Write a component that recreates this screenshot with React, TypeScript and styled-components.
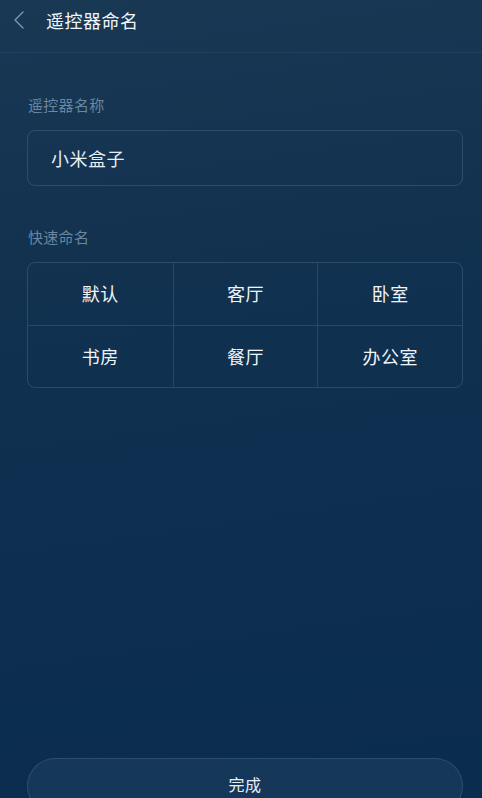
import React from "react";
import styled, { createGlobalStyle } from "styled-components";

const GlobalStyle = createGlobalStyle`
  html, body {
    margin: 0;
    padding: 0;
    overflow: hidden;
    background: #0c2c4d;
  }
  body {
    font-family: "Noto Sans CJK SC", "Noto Sans", sans-serif;
    -webkit-font-smoothing: antialiased;
  }
`;

const quickNames = ["默认", "客厅", "卧室", "书房", "餐厅", "办公室"];

const Page = styled.div`
  display: flex;
  flex-direction: column;
  height: 100vh;
  background: linear-gradient(172deg, #183854 0%, #11314f 35%, #0d2e4f 70%, #0a2c4e 100%);
  color: #e9eff5;
`;

const Header = styled.header`
  display: flex;
  align-items: center;
  height: 53px;
  padding: 0 0 0 13px;
  border-bottom: 1px solid rgba(255, 255, 255, 0.06);
  box-sizing: border-box;
  flex-shrink: 0;
`;

const BackButton = styled.button`
  display: flex;
  align-items: center;
  justify-content: center;
  width: 12px;
  height: 40px;
  margin: -12px 21px 0 0;
  padding: 0;
  border: 0;
  background: none;
  cursor: pointer;
`;

const Title = styled.h1`
  margin: -13px 0 0;
  font-size: 18px;
  font-weight: 400;
  color: #f1f5f9;
  letter-spacing: 0.5px;
`;

const Body = styled.main`
  display: flex;
  flex-direction: column;
  flex: 1;
  padding: 0 19px 0 27px;
`;

const SectionLabel = styled.div<{ $top: number }>`
  margin-top: ${(p) => p.$top}px;
  font-size: 15px;
  line-height: 20px;
  color: #6a86a1;
  padding-left: 1px;
  letter-spacing: 0.3px;
`;

const NameField = styled.div`
  display: flex;
  align-items: center;
  height: 56px;
  margin-top: 15px;
  padding: 0 23px;
  border: 1px solid rgba(150, 180, 210, 0.2);
  border-radius: 8px;
  font-size: 18px;
  color: #e6edf4;
  letter-spacing: 0.5px;
  box-sizing: border-box;
`;

const Grid = styled.div`
  display: grid;
  grid-template-columns: repeat(3, 1fr);
  grid-auto-rows: 62px;
  margin-top: 15px;
  border: 1px solid rgba(150, 180, 210, 0.2);
  border-radius: 8px;
  overflow: hidden;
`;

const Cell = styled.button<{ $col: number; $row: number }>`
  display: flex;
  align-items: center;
  justify-content: center;
  padding: 0 0 2px;
  background: none;
  border: 0;
  border-left: ${(p) => (p.$col > 0 ? "1px solid rgba(150, 180, 210, 0.18)" : "0")};
  border-top: ${(p) => (p.$row > 0 ? "1px solid rgba(150, 180, 210, 0.18)" : "0")};
  font-family: inherit;
  font-size: 18px;
  font-weight: 400;
  color: #f1f5f9;
  letter-spacing: 0.5px;
  cursor: pointer;
`;

const DoneButton = styled.button`
  margin: auto 0 -16px;
  height: 56px;
  border: 1px solid rgba(160, 190, 220, 0.16);
  border-radius: 28px;
  background: rgba(120, 160, 200, 0.1);
  color: #e6edf4;
  font-family: inherit;
  font-size: 16px;
  font-weight: 400;
  letter-spacing: 0.5px;
  padding: 0 0 5px;
  cursor: pointer;
  flex-shrink: 0;
`;

const BackIcon = () => (
  <svg width="10" height="18" viewBox="0 0 10 18" fill="none">
    <path d="M9 1L1 9l8 8" stroke="#8196ab" strokeWidth="1.4" strokeLinecap="round" strokeLinejoin="round" />
  </svg>
);

export default function App() {
  return (
    <>
      <GlobalStyle />
      <Page>
        <Header>
          <BackButton aria-label="返回">
            <BackIcon />
          </BackButton>
          <Title>遥控器命名</Title>
        </Header>
        <Body>
          <SectionLabel $top={42}>遥控器名称</SectionLabel>
          <NameField>小米盒子</NameField>
          <SectionLabel $top={41}>快速命名</SectionLabel>
          <Grid>
            {quickNames.map((name, i) => (
              <Cell key={name} $col={i % 3} $row={Math.floor(i / 3)}>
                {name}
              </Cell>
            ))}
          </Grid>
          <DoneButton>完成</DoneButton>
        </Body>
      </Page>
    </>
  );
}
